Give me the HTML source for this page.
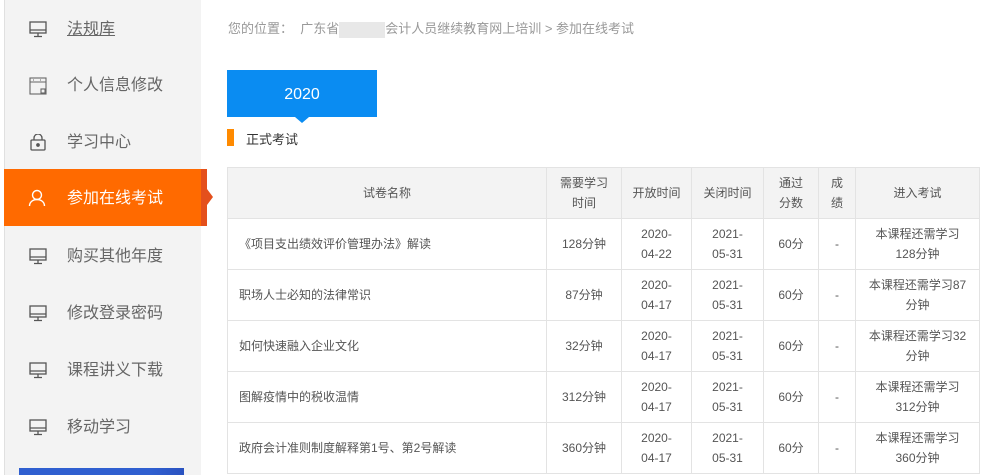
<!DOCTYPE html>
<html><head><meta charset="utf-8"><style>
*{margin:0;padding:0;box-sizing:border-box}
body{width:1004px;height:475px;overflow:hidden;background:#fff;font-family:"Liberation Sans","Noto Sans CJK SC",sans-serif;position:relative}
.side{position:absolute;left:4px;top:0;width:197px;height:475px;background:#f3f3f3;border-left:1px solid #e0e0e0}
.it{position:absolute;left:0;width:197px;height:56px;font-size:16px;color:#666;line-height:56px}
.it span{position:absolute;left:62px}
.it svg{position:absolute;left:24px;top:19px}
.act{position:absolute;left:4px;top:169px;width:203px;height:57px;background:#ff6a00}
.act .st{position:absolute;right:0;top:0;width:6px;height:57px;background:#e4501c}
.act .ar{position:absolute;left:203px;top:20px;width:0;height:0;border-top:8px solid transparent;border-bottom:8px solid transparent;border-left:6px solid #e4501c}
.blue{position:absolute;left:19px;top:468px;width:165px;height:7px;background:linear-gradient(90deg,#2f5fd0 80%,#2a52c0)}
.bc{position:absolute;left:228px;top:18px;font-size:13px;color:#999}
.blur{display:inline-block;width:46px;height:16px;background:#e8e8e8;vertical-align:middle}
.year{position:absolute;left:227px;top:70px;width:150px;height:47px;background:#0a8cf2;color:#fff;font-size:16px;text-align:center;line-height:49px}
.tri{position:absolute;left:295px;top:117px;border-left:7px solid transparent;border-right:7px solid transparent;border-top:6px solid #0a8cf2}
.bar{position:absolute;left:227px;top:129px;width:7px;height:17px;background:#ff8a00}
.sub{position:absolute;left:246px;top:129px;font-size:13px;color:#333}
table{position:absolute;left:227px;top:167px;border-collapse:collapse;font-size:12px;color:#555}
td,th{border:1px solid #e3e3e3;text-align:center;line-height:20px;font-weight:normal}
th{background:#f3f3f3;height:51px}
td{height:51px}
td.l{text-align:left;padding-left:11px}
</style></head><body>
<div class="side">
<div class="it" style="top:2px"><svg width="18" height="17" viewBox="0 0 18 17" fill="none" stroke="#555" stroke-width="1.3"><rect x="1" y="1" width="16" height="11"/><path d="M1 9h16M9 12v3M5 15.5h8"/></svg><span style="text-decoration:underline">法规库</span></div>
<div class="it" style="top:58px"><svg width="18" height="18" viewBox="0 0 18 18" fill="none" stroke="#666" stroke-width="1.1"><rect x="1" y="1" width="16" height="16"/><path d="M1 5h16M4 3h1M11 3h1"/><rect x="12" y="12" width="4" height="4"/></svg><span>个人信息修改</span></div>
<div class="it" style="top:115px"><svg width="18" height="18" viewBox="0 0 18 18" fill="none" stroke="#555" stroke-width="1.3"><rect x="2" y="6" width="14" height="10" rx="1"/><path d="M5 6V4a4 4 0 0 1 8 0v2"/><circle cx="9" cy="11" r="1.2" fill="#555"/></svg><span>学习中心</span></div>
<div class="it" style="top:229px"><svg width="18" height="17" viewBox="0 0 18 17" fill="none" stroke="#555" stroke-width="1.3"><rect x="1" y="1" width="16" height="11"/><path d="M1 9h16M9 12v3M5 15.5h8"/></svg><span>购买其他年度</span></div>
<div class="it" style="top:286px"><svg width="18" height="17" viewBox="0 0 18 17" fill="none" stroke="#555" stroke-width="1.3"><rect x="1" y="1" width="16" height="11"/><path d="M1 9h16M9 12v3M5 15.5h8"/></svg><span>修改登录密码</span></div>
<div class="it" style="top:343px"><svg width="18" height="17" viewBox="0 0 18 17" fill="none" stroke="#555" stroke-width="1.3"><rect x="1" y="1" width="16" height="11"/><path d="M1 9h16M9 12v3M5 15.5h8"/></svg><span>课程讲义下载</span></div>
<div class="it" style="top:400px"><svg width="18" height="17" viewBox="0 0 18 17" fill="none" stroke="#555" stroke-width="1.3"><rect x="1" y="1" width="16" height="11"/><path d="M1 9h16M9 12v3M5 15.5h8"/></svg><span>移动学习</span></div>
</div>
<div class="act"><div class="st"></div><div class="ar"></div>
<div class="it" style="top:1px;color:#fff;height:57px;line-height:57px"><svg width="18" height="18" viewBox="0 0 18 18" fill="none" stroke="#fff" stroke-width="1.4"><circle cx="9" cy="6" r="4.5"/><path d="M1.5 17c0-4 3.5-6.5 7.5-6.5s7.5 2.5 7.5 6.5"/></svg><span style="left:63px">参加在线考试</span></div></div>
<div class="blue"></div>
<div class="bc">您的位置：&nbsp; 广东省<span class="blur"></span>会计人员继续教育网上培训 &gt; 参加在线考试</div>
<div class="year">2020</div><div class="tri"></div>
<div class="bar"></div><div class="sub">正式考试</div>
<table>
<tr><th style="width:319px">试卷名称</th><th style="width:75px">需要学习<br>时间</th><th style="width:70px">开放时间</th><th style="width:72px">关闭时间</th><th style="width:55px">通过<br>分数</th><th style="width:37px">成<br>绩</th><th style="width:124px">进入考试</th></tr>
<tr><td class="l">《项目支出绩效评价管理办法》解读</td><td>128分钟</td><td>2020-<br>04-22</td><td>2021-<br>05-31</td><td>60分</td><td>-</td><td>本课程还需学习<br>128分钟</td></tr>
<tr><td class="l">职场人士必知的法律常识</td><td>87分钟</td><td>2020-<br>04-17</td><td>2021-<br>05-31</td><td>60分</td><td>-</td><td>本课程还需学习87<br>分钟</td></tr>
<tr><td class="l">如何快速融入企业文化</td><td>32分钟</td><td>2020-<br>04-17</td><td>2021-<br>05-31</td><td>60分</td><td>-</td><td>本课程还需学习32<br>分钟</td></tr>
<tr><td class="l">图解疫情中的税收温情</td><td>312分钟</td><td>2020-<br>04-17</td><td>2021-<br>05-31</td><td>60分</td><td>-</td><td>本课程还需学习<br>312分钟</td></tr>
<tr><td class="l">政府会计准则制度解释第1号、第2号解读</td><td>360分钟</td><td>2020-<br>04-17</td><td>2021-<br>05-31</td><td>60分</td><td>-</td><td>本课程还需学习<br>360分钟</td></tr>
</table>
</body></html>
